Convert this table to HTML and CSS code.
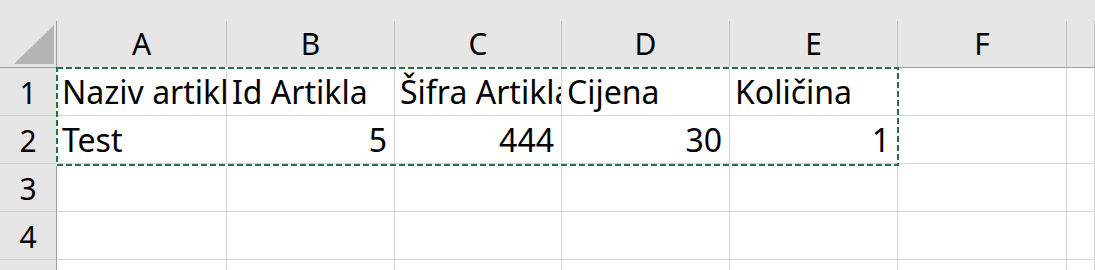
FILE: index.html
```html
<!DOCTYPE html>
<html>
<head>
    <title>Artikli</title>
    <link rel="stylesheet" href="styles.css">
</head>
<body>
    <div class="sheet">
        <div class="top-strip"></div>
        <div class="grid">
            <!-- column headers -->
            <div class="corner">
                <svg width="57" height="47" viewBox="0 0 57 47"><polygon points="14,43 54,43 54,4" fill="#b4b4b4"/></svg>
            </div>
            <div class="col-head">A</div>
            <div class="col-head">B</div>
            <div class="col-head">C</div>
            <div class="col-head">D</div>
            <div class="col-head">E</div>
            <div class="col-head">F</div>
            <div class="col-head"></div>

            <!-- row 1 -->
            <div class="row-head">1</div>
            <div class="cell">Naziv artikla</div>
            <div class="cell">Id Artikla</div>
            <div class="cell">Šifra Artikla</div>
            <div class="cell">Cijena</div>
            <div class="cell">Količina</div>
            <div class="cell"></div>
            <div class="cell"></div>

            <!-- row 2 -->
            <div class="row-head">2</div>
            <div class="cell">Test</div>
            <div class="cell num">5</div>
            <div class="cell num">444</div>
            <div class="cell num">30</div>
            <div class="cell num">1</div>
            <div class="cell"></div>
            <div class="cell"></div>

            <!-- row 3 -->
            <div class="row-head">3</div>
            <div class="cell"></div>
            <div class="cell"></div>
            <div class="cell"></div>
            <div class="cell"></div>
            <div class="cell"></div>
            <div class="cell"></div>
            <div class="cell"></div>

            <!-- row 4 -->
            <div class="row-head">4</div>
            <div class="cell"></div>
            <div class="cell"></div>
            <div class="cell"></div>
            <div class="cell"></div>
            <div class="cell"></div>
            <div class="cell"></div>
            <div class="cell"></div>

            <!-- row 5 (cut off) -->
            <div class="row-head"></div>
            <div class="cell"></div>
            <div class="cell"></div>
            <div class="cell"></div>
            <div class="cell"></div>
            <div class="cell"></div>
            <div class="cell"></div>
            <div class="cell"></div>
        </div>
        <!-- copy selection around A1:E2 -->
        <svg class="copy-range" width="843" height="99" viewBox="0 0 843 99">
            <rect x="1" y="1" width="841" height="97" fill="none" stroke="#ffffff" stroke-width="2"/>
            <rect x="1" y="1" width="841" height="97" fill="none" stroke="#217346" stroke-width="2" stroke-dasharray="6 3"/>
        </svg>
    </div>
</body>
</html>
```

FILE: styles.css
```css
body {
    margin: 0;
    background-color: #ffffff;
    font-family: "Noto Sans", "Liberation Sans", sans-serif;
    color: #000000;
    overflow: hidden;
}
.sheet {
    position: relative;
    width: 1095px;
    height: 270px;
    overflow: hidden;
}
.top-strip {
    height: 21px;
    background-color: #e6e6e6;
}
.grid {
    display: grid;
    grid-template-columns: 57px 170px 168px 167px 168px 168px 169px 1fr;
    grid-template-rows: 47px repeat(5, 48px);
}
.corner {
    background-color: #e6e6e6;
    border-right: 1px solid #9e9e9e;
    border-bottom: 1px solid #9e9e9e;
    box-sizing: border-box;
}
.corner svg {
    display: block;
}
.col-head {
    background-color: #e6e6e6;
    border-right: 1px solid #c2c2c2;
    border-bottom: 1px solid #9e9e9e;
    box-sizing: border-box;
    display: flex;
    align-items: flex-end;
    justify-content: center;
    padding-bottom: 8px;
    font-size: 30px;
    line-height: 1;
}
.row-head {
    background-color: #e6e6e6;
    border-right: 1px solid #9e9e9e;
    border-bottom: 1px solid #d0d0d0;
    box-sizing: border-box;
    display: flex;
    align-items: flex-end;
    justify-content: center;
    padding-bottom: 7px;
    font-size: 30px;
    line-height: 1;
}
.cell {
    border-right: 1px solid #d4d4d4;
    border-bottom: 1px solid #d4d4d4;
    box-sizing: border-box;
    display: flex;
    align-items: flex-end;
    padding: 0 7px 7px 5px;
    font-size: 32px;
    line-height: 1;
    white-space: nowrap;
    overflow: hidden;
}
.cell.num {
    justify-content: flex-end;
}
.copy-range {
    position: absolute;
    left: 56px;
    top: 67px;
    display: block;
}
```
